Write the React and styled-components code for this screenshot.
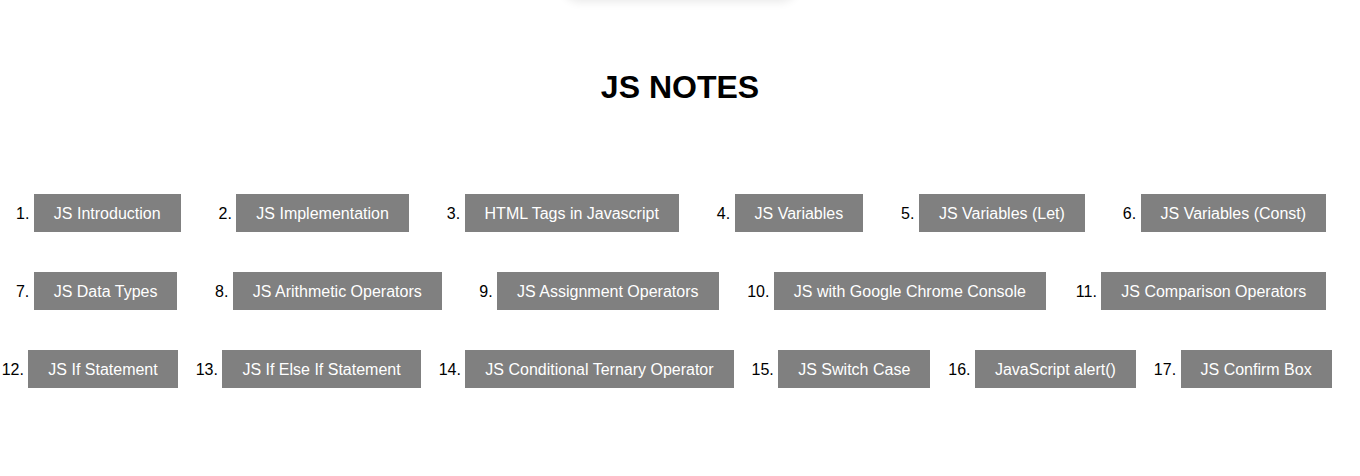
import React from 'react';
import styled, {createGlobalStyle} from 'styled-components';

const GlobalStyle = createGlobalStyle`
  html, body {
    margin: 0;
    padding: 0;
    background: #fff;
  }

  body {
    font-family: "Liberation Sans", Arial, sans-serif;
    font-size: 16px;
    color: #000;
  }
`;

const notes = [
  'JS Introduction',
  'JS Implementation',
  'HTML Tags in Javascript',
  'JS Variables',
  'JS Variables (Let)',
  'JS Variables (Const)',
  'JS Data Types',
  'JS Arithmetic Operators',
  'JS Assignment Operators',
  'JS with Google Chrome Console',
  'JS Comparison Operators',
  'JS If Statement',
  'JS If Else If Statement',
  'JS Conditional Ternary Operator',
  'JS Switch Case',
  'JavaScript alert()',
  'JS Confirm Box'
];

const Page = styled.div`
  padding: 0 8px;
`;

const NavShadow = styled.div`
  width: 238px;
  height: 40px;
  margin: -40px auto 0;
  border-radius: 0 0 20px 20px;
  box-shadow: 0 2px 10px rgba(0, 0, 0, 0.09);
`;

const Title = styled.h1`
  margin: 69px 0 0;
  font-size: 32px;
  line-height: 36px;
  font-weight: bold;
  text-align: center;
`;

const NoteList = styled.ol`
  display: flex;
  flex-wrap: wrap;
  justify-content: space-around;
  margin: 69px -2px 0;
  padding: 0;
`;

const NoteItem = styled.li`
  margin: 20px;
`;

const NoteButton = styled.button`
  display: inline-block;
  padding: 11px 20px 9px;
  border: none;
  background: gray;
  color: #fff;
  font-family: "Liberation Sans", Arial, sans-serif;
  font-size: 16px;
  line-height: 18px;
  cursor: pointer;
`;

const App = () => {
  return (
    <Page>
      <GlobalStyle />
      <NavShadow />
      <Title>JS NOTES</Title>
      <NoteList>
        {notes.map(note => (
          <NoteItem key={note}>
            <NoteButton>{note}</NoteButton>
          </NoteItem>
        ))}
      </NoteList>
    </Page>
  );
};

export default App;
